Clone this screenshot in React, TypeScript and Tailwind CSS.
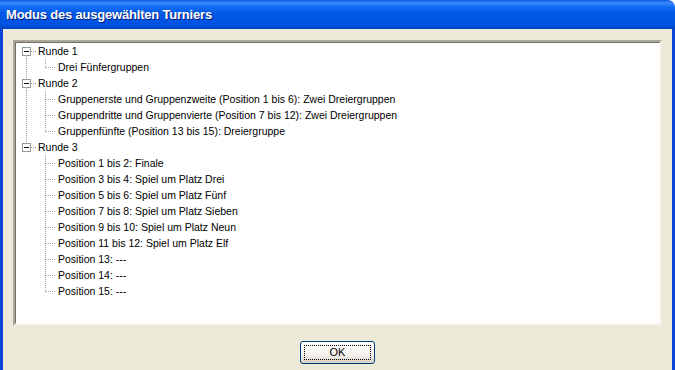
import React from 'react';

type TreeNode = { label: string; children: string[] };

const tree: TreeNode[] = [
  { label: 'Runde 1', children: ['Drei Fünfergruppen'] },
  {
    label: 'Runde 2',
    children: [
      'Gruppenerste und Gruppenzweite (Position 1 bis 6): Zwei Dreiergruppen',
      'Gruppendritte und Gruppenvierte (Position 7 bis 12): Zwei Dreiergruppen',
      'Gruppenfünfte (Position 13 bis 15): Dreiergruppe',
    ],
  },
  {
    label: 'Runde 3',
    children: [
      'Position 1 bis 2: Finale',
      'Position 3 bis 4: Spiel um Platz Drei',
      'Position 5 bis 6: Spiel um Platz Fünf',
      'Position 7 bis 8: Spiel um Platz Sieben',
      'Position 9 bis 10: Spiel um Platz Neun',
      'Position 11 bis 12: Spiel um Platz Elf',
      'Position 13: ---',
      'Position 14: ---',
      'Position 15: ---',
    ],
  },
];

const dot = { stroke: '#a0a0a0', strokeDasharray: '1 1', shapeRendering: 'crispEdges' as const };

// connector for a top level node: box with minus sign + dotted lines
const RootGutter: React.FC<{ first: boolean; last: boolean }> = ({ first, last }) => (
  <svg width="22" height="16" className="shrink-0">
    {!first && <line x1="10.5" y1="0" x2="10.5" y2="4" {...dot} />}
    {!last && <line x1="10.5" y1="13" x2="10.5" y2="16" {...dot} />}
    <line x1="15" y1="8.5" x2="21" y2="8.5" {...dot} />
    <rect x="6.5" y="4.5" width="8" height="8" fill="#fff" stroke="#919b9c" shapeRendering="crispEdges" />
    <line x1="8" y1="8.5" x2="13" y2="8.5" stroke="#000" shapeRendering="crispEdges" />
  </svg>
);

const ChildGutter: React.FC<{ parentLast: boolean; last: boolean }> = ({ parentLast, last }) => (
  <svg width="42" height="16" className="shrink-0">
    {!parentLast && <line x1="10.5" y1="0" x2="10.5" y2="16" {...dot} />}
    <line x1="29.5" y1="0" x2="29.5" y2={last ? 9 : 16} {...dot} />
    <line x1="30" y1="8.5" x2="40" y2="8.5" {...dot} />
  </svg>
);

const App: React.FC = () => {
  return (
    <div className="w-[675px] h-[370px] overflow-hidden bg-white flex flex-col font-['Liberation_Sans',Arial,sans-serif]">
      {/* title bar */}
      <div className="h-[29px] shrink-0 rounded-tr-[7px] bg-[linear-gradient(to_bottom,#0a5de6_0%,#3b8cf7_10%,#1670f5_22%,#0058e6_45%,#0054e3_75%,#004fd8_90%,#0040bc_100%)] flex items-center pl-[6px]">
        <span className="text-white font-bold text-[13px] tracking-[-0.2px] [text-shadow:1px_1px_0_#0a1f7a]">
          Modus des ausgewählten Turniers
        </span>
      </div>

      {/* body */}
      <div className="flex-1 bg-[#ece9d8] border-l-[3px] border-r-[3px] border-[#0a45d8] flex flex-col pt-[11px] px-[10px]">
        <div className="h-[286px] border-t-2 border-l-2 border-t-[#aca899] border-l-[#aca899] border-b-2 border-r-2 border-b-[#f1efe2] border-r-[#f1efe2] bg-white">
          <div className="h-full border border-t-[#716f64] border-l-[#716f64] border-b-white border-r-white">
            <div className="flex flex-col text-[10.5px] text-black leading-[16px]">
              {tree.map((node, i) => (
                <React.Fragment key={node.label}>
                  <div className="flex items-center h-4">
                    <RootGutter first={i === 0} last={i === tree.length - 1} />
                    <span className="whitespace-nowrap">{node.label}</span>
                  </div>
                  {node.children.map((c, j) => (
                    <div key={c} className="flex items-center h-4">
                      <ChildGutter parentLast={i === tree.length - 1} last={j === node.children.length - 1} />
                      <span className="whitespace-nowrap">{c}</span>
                    </div>
                  ))}
                </React.Fragment>
              ))}
            </div>
          </div>
        </div>

        <div className="flex justify-center pt-[15px]">
          <button className="w-[75px] h-[23px] border border-[#003c74] rounded-[3px] bg-[linear-gradient(to_bottom,#ffffff_0%,#f4f3ee_60%,#d6d0c5_100%)] p-[3px] text-[11px] text-black">
            <span className="flex items-center justify-center w-full h-full border border-dotted border-black">
              OK
            </span>
          </button>
        </div>
      </div>
    </div>
  );
};

export default App;
